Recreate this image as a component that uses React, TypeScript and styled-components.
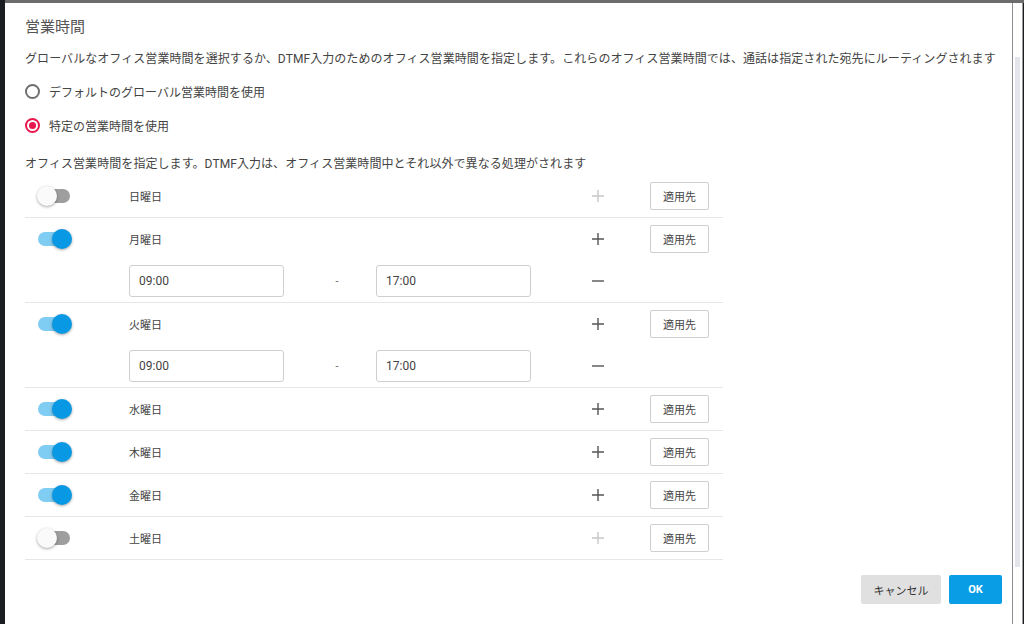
import styled, { createGlobalStyle } from "styled-components";

const GlobalStyle = createGlobalStyle`
    html, body {
        margin: 0;
        padding: 0;
        background: #1a1d22;
    }
    body {
        font-family: Roboto, "Noto Sans CJK JP", sans-serif;
        color: #444;
    }
`;

const Frame = styled.div`
    width: 1024px;
    height: 624px;
    display: flex;
    flex-direction: column;
    padding-left: 5px;
    box-sizing: border-box;
    overflow: hidden;
`;
const TopBand = styled.div`
    height: 3px;
    background: #6c6c6c;
    flex-shrink: 0;
`;
const Body = styled.div`
    display: flex;
    flex: 1;
`;
const Dialog = styled.div`
    width: 1008px;
    background: #fff;
    border-right: 1px solid #8f8f8f;
    padding: 13px 0 0 20px;
    box-sizing: border-box;
    display: flex;
    flex-direction: column;
`;
const Gutter = styled.div`
    width: 10px;
    background: #fff;
    border-right: 1px solid #9a9a9a;
    padding: 54px 2px 0 2px;
    box-sizing: border-box;
`;
const Thumb = styled.div`
    width: 5px;
    height: 510px;
    background: #e4e4ec;
`;
const Title = styled.h1`
    margin: 0;
    font-size: 15px;
    font-weight: 400;
    line-height: 22px;
    color: #555;
`;
const Text = styled.p<{ $top: number }>`
    margin: ${(p) => p.$top}px 0 0 0;
    font-size: 12px;
    line-height: 20px;
    letter-spacing: 0.07px;
    color: #444;
    white-space: nowrap;
`;
const RadioGroup = styled.div`
    margin-top: 5px;
    display: flex;
    flex-direction: column;
`;
const RadioRow = styled.label`
    height: 34px;
    display: flex;
    align-items: center;
    gap: 9px;
    font-size: 12px;
    color: #444;
`;
const RadioCircle = styled.span<{ $checked: boolean }>`
    width: 15px;
    height: 15px;
    border-radius: 50%;
    box-sizing: border-box;
    border: 2px solid ${(p) => (p.$checked ? "#e8174d" : "#6f6f6f")};
    display: flex;
    align-items: center;
    justify-content: center;
    &::after {
        content: "";
        width: 7px;
        height: 7px;
        border-radius: 50%;
        background: ${(p) => (p.$checked ? "#e8174d" : "transparent")};
    }
`;
const Table = styled.div`
    margin-top: 1px;
    width: 698px;
    display: flex;
    flex-direction: column;
`;
const DayBlock = styled.div`
    border-bottom: 1px solid #e6e6e6;
`;
const Row = styled.div`
    height: 42px;
    display: grid;
    grid-template-columns: 104px 155px 92px 155px 119px 59px 14px;
    align-items: center;
`;
const DayLabel = styled.span`
    grid-column: 2 / 5;
    font-size: 11px;
    color: #444;
`;
const Track = styled.span<{ $on: boolean }>`
    position: relative;
    margin-left: 13px;
    width: 32px;
    height: 14px;
    border-radius: 7px;
    background: ${(p) => (p.$on ? "#80cdf3" : "#9e9e9e")};
    &::after {
        content: "";
        position: absolute;
        top: -3px;
        left: ${(p) => (p.$on ? "14px" : "-1px")};
        width: 20px;
        height: 20px;
        border-radius: 50%;
        background: ${(p) => (p.$on ? "#0998e3" : "#fafafa")};
        box-shadow: 0 1px 3px rgba(0, 0, 0, 0.35);
    }
`;
const IconCell = styled.span<{ $muted?: boolean }>`
    grid-column: 5;
    margin-left: 61px;
    width: 12px;
    height: 12px;
    display: flex;
    color: ${(p) => (p.$muted ? "#c8c8c8" : "#555")};
`;
const ApplyButton = styled.button`
    grid-column: 6;
    height: 28px;
    width: 59px;
    background: #fff;
    border: 1px solid #cfcfcf;
    border-radius: 2px;
    font-family: inherit;
    font-size: 11px;
    color: #444;
    padding: 0;
`;
const TimeInput = styled.div<{ $col: number }>`
    grid-column: ${(p) => p.$col};
    height: 32px;
    border: 1px solid #cfcfcf;
    border-radius: 3px;
    box-sizing: border-box;
    display: flex;
    align-items: center;
    padding-left: 9px;
    font-size: 12px;
    color: #444;
`;
const Dash = styled.span`
    grid-column: 3;
    justify-self: center;
    font-size: 11px;
    color: #666;
    margin-left: 14px;
`;
const Footer = styled.div`
    margin-top: 15px;
    display: flex;
    justify-content: flex-end;
    gap: 8px;
    padding-right: 10px;
`;
const FooterButton = styled.button<{ $primary?: boolean }>`
    height: 29px;
    padding: 0;
    width: ${(p) => (p.$primary ? "53px" : "80px")};
    border: none;
    border-radius: 2px;
    font-family: inherit;
    font-size: 11px;
    font-weight: ${(p) => (p.$primary ? 700 : 400)};
    background: ${(p) => (p.$primary ? "#089de4" : "#e0e0e0")};
    color: ${(p) => (p.$primary ? "#fff" : "#333")};
`;

const Plus = () => (
    <svg width="12" height="12" viewBox="0 0 12 12">
        <path d="M6 0v12M0 6h12" stroke="currentColor" strokeWidth="1.4" />
    </svg>
);
const Minus = () => (
    <svg width="12" height="12" viewBox="0 0 12 12">
        <path d="M0 6h12" stroke="currentColor" strokeWidth="1.4" />
    </svg>
);

interface Day {
    name: string;
    on: boolean;
    ranges: [string, string][];
}

const days: Day[] = [
    { name: "日曜日", on: false, ranges: [] },
    { name: "月曜日", on: true, ranges: [["09:00", "17:00"]] },
    { name: "火曜日", on: true, ranges: [["09:00", "17:00"]] },
    { name: "水曜日", on: true, ranges: [] },
    { name: "木曜日", on: true, ranges: [] },
    { name: "金曜日", on: true, ranges: [] },
    { name: "土曜日", on: false, ranges: [] },
];

function App() {
    return (
        <>
            <GlobalStyle />
            <Frame>
                <TopBand />
                <Body>
                    <Dialog>
                        <Title>営業時間</Title>
                        <Text $top={11}>
                            グローバルなオフィス営業時間を選択するか、DTMF入力のためのオフィス営業時間を指定します。これらのオフィス営業時間では、通話は指定された宛先にルーティングされます
                        </Text>
                        <RadioGroup>
                            <RadioRow>
                                <RadioCircle $checked={false} />
                                デフォルトのグローバル営業時間を使用
                            </RadioRow>
                            <RadioRow>
                                <RadioCircle $checked={true} />
                                特定の営業時間を使用
                            </RadioRow>
                        </RadioGroup>
                        <Text $top={12}>
                            オフィス営業時間を指定します。DTMF入力は、オフィス営業時間中とそれ以外で異なる処理がされます
                        </Text>
                        <Table>
                            {days.map((day) => (
                                <DayBlock key={day.name}>
                                    <Row>
                                        <Track $on={day.on} />
                                        <DayLabel>{day.name}</DayLabel>
                                        <IconCell $muted={!day.on}>
                                            <Plus />
                                        </IconCell>
                                        <ApplyButton>適用先</ApplyButton>
                                    </Row>
                                    {day.ranges.map(([from, to]) => (
                                        <Row key={from + to}>
                                            <TimeInput $col={2}>{from}</TimeInput>
                                            <Dash>-</Dash>
                                            <TimeInput $col={4}>{to}</TimeInput>
                                            <IconCell>
                                                <Minus />
                                            </IconCell>
                                        </Row>
                                    ))}
                                </DayBlock>
                            ))}
                        </Table>
                        <Footer>
                            <FooterButton>キャンセル</FooterButton>
                            <FooterButton $primary>OK</FooterButton>
                        </Footer>
                    </Dialog>
                    <Gutter>
                        <Thumb />
                    </Gutter>
                </Body>
            </Frame>
        </>
    );
}

export default App;
